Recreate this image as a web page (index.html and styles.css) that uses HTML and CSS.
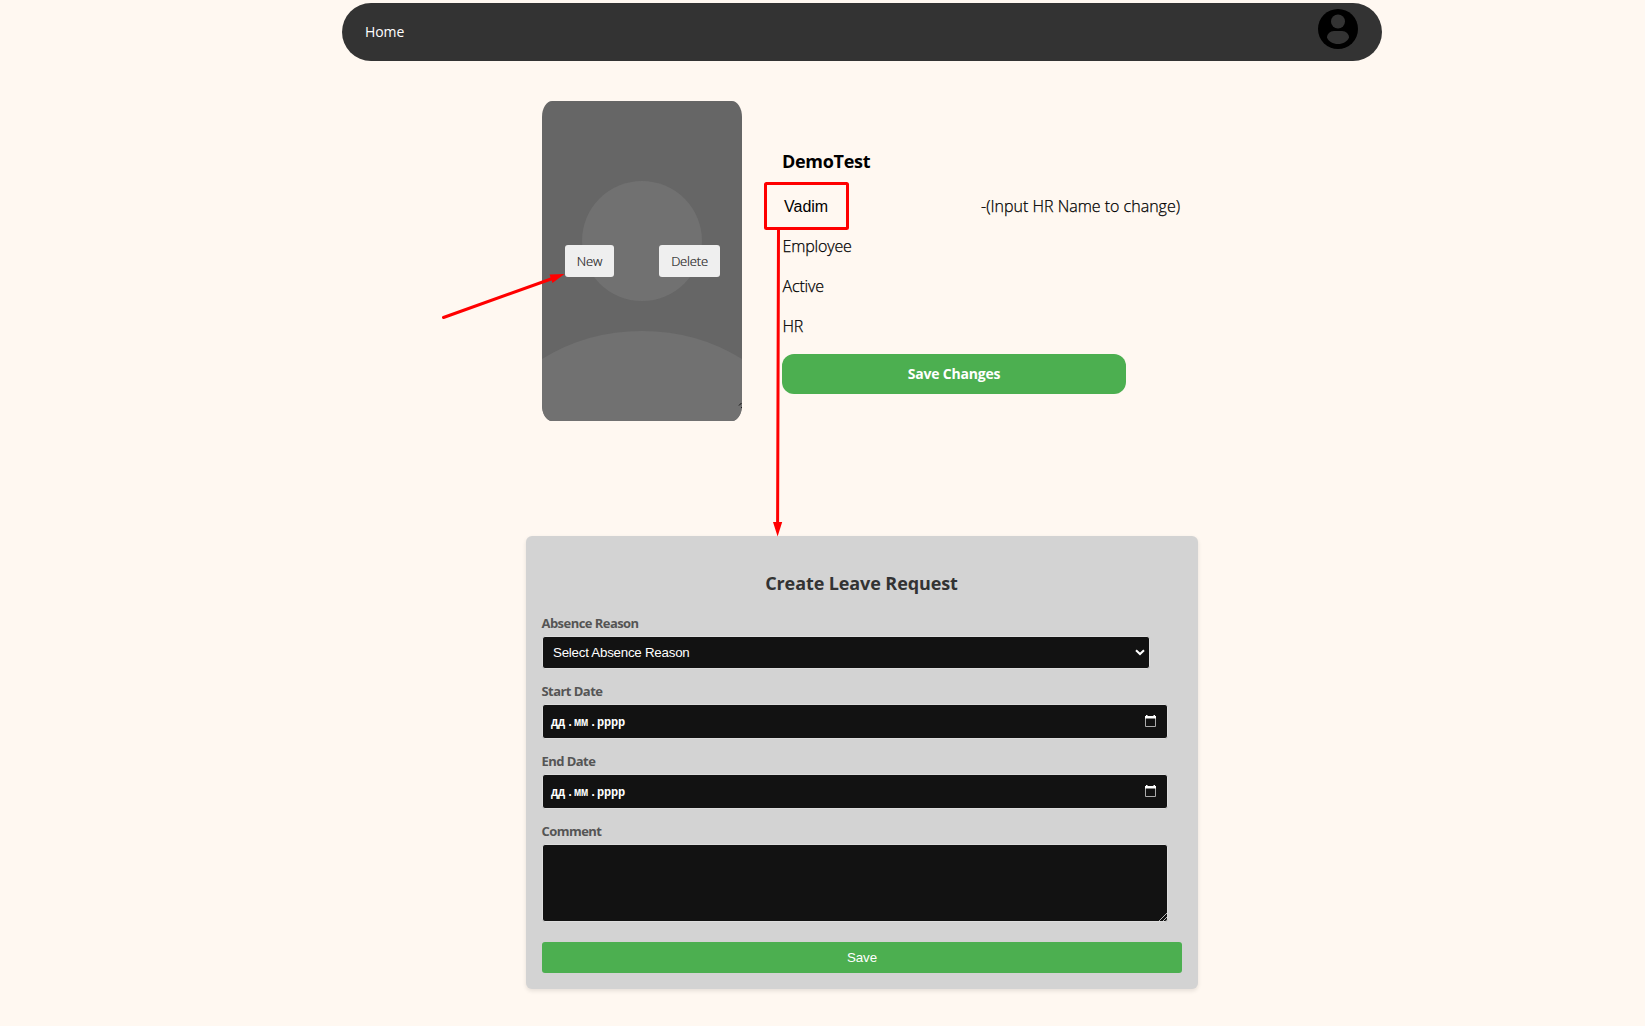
FILE: index.html
```html
<!DOCTYPE html>
<html lang="en">
<head>
<meta charset="utf-8">
<title>Profile</title>
<link rel="stylesheet" href="styles.css">
</head>
<body>
<nav class="navbar">
  <a class="home">Home</a>
  <svg class="account" width="40" height="40" viewBox="0 0 40 40">
    <circle cx="20" cy="20" r="20" fill="#000"/>
    <circle cx="20" cy="12.5" r="7" fill="#333"/>
    <path d="M16 22H24C28 22 31 25 31 28.5C29.500 32.500 25 35 20 35C15 35 10.500 32.500 9 28.500C9 25 12 22 16 22Z" fill="#333"/>
  </svg>
</nav>

<section class="profile">
  <div class="photo">
    <svg class="avatar" width="200" height="320" viewBox="0 0 200 320">
      <rect width="200" height="320" fill="#666"/>
      <circle cx="100" cy="140" r="60" fill="#717171"/>
      <path d="M0 258Q45 230 100 230Q155 230 200 258V320H0Z" fill="#717171"/>
      <path d="M197 304.500L199.500 302M199 307L200 306" stroke="#111" stroke-width="1"/>
    </svg>
    <button class="photo-btn new">New</button>
    <button class="photo-btn delete">Delete</button>
  </div>
  <div class="details">
    <h2 class="name">DemoTest</h2>
    <div class="row"><span class="hr-name">Vadim</span><span class="hint">-(Input HR Name to change)</span></div>
    <div class="row"><span class="role">Employee</span></div>
    <div class="row"><span class="state">Active</span></div>
    <div class="row"><span class="dept">HR</span></div>
    <button class="save-changes"><span>Save Changes</span></button>
  </div>
</section>

<form class="leave">
  <h2 class="leave-title">Create Leave Request</h2>
  <label class="label">Absence Reason</label>
  <div class="field select"><span>Select Absence Reason</span>
    <svg width="10" height="7" viewBox="0 0 10 7"><path d="M1 1.200L5 5L9 1.200" fill="none" stroke="#fff" stroke-width="2"/></svg>
  </div>
  <label class="label">Start Date</label>
  <div class="field date"><span class="date-text"><b>дд</b><b>.</b><b>мм</b><b>.</b><b>рррр</b></span>
    <svg width="11" height="12" viewBox="0 0 11 12"><path d="M.5 2V11.500H10.500V2" fill="none" stroke="#aaa"/><path d="M0 1H1V0H2.500V1H8.500V0H10V1H11V3.500H0Z" fill="#fff"/></svg>
  </div>
  <label class="label">End Date</label>
  <div class="field date"><span class="date-text"><b>дд</b><b>.</b><b>мм</b><b>.</b><b>рррр</b></span>
    <svg width="11" height="12" viewBox="0 0 11 12"><path d="M.5 2V11.500H10.500V2" fill="none" stroke="#aaa"/><path d="M0 1H1V0H2.500V1H8.500V0H10V1H11V3.500H0Z" fill="#fff"/></svg>
  </div>
  <label class="label">Comment</label>
  <div class="field comment">
    <svg width="8" height="8" viewBox="0 0 8 8"><path d="M0 8L8 0M4 8L8 4" stroke="#ccc" stroke-width=".9"/></svg>
  </div>
  <button class="save" type="button">Save</button>
</form>

<svg class="annotations" width="1645" height="1026" viewBox="0 0 1645 1026">
  <rect x="765.500" y="183.500" width="82" height="45" rx="1" fill="none" stroke="#f00" stroke-width="3"/>
  <path d="M778.500 229L777.600 524M443.500 317.500L551 279" fill="none" stroke="#f00" stroke-width="3" stroke-linecap="round"/>
  <path d="M773 522H782.200L777.600 536.500ZM564.500 274L549.500 274.500L552.500 283Z" fill="#f00"/>
</svg>
</body>
</html>
```
FILE: styles.css
```css
* { box-sizing: border-box; }
body {
  margin: 0;
  height: 1026px;
  padding-top: 3px;
  overflow: hidden;
  background: #fff8f1;
  font-family: "Open Sans", "Noto Sans", sans-serif;
  color: #000;
}
button { border: 0; padding: 0; font-family: inherit; }
.navbar {
  width: 1040px;
  height: 58px;
  margin-left: 342px;
  padding: 6px 24px 0 23px;
  border-radius: 29px;
  background: #333;
  display: flex;
  justify-content: space-between;
  align-items: flex-start;
}
.home { color: #fff; font-size: 14px; line-height: 20px; margin-top: 13px; letter-spacing: -0.1px; }
.profile { display: flex; margin: 40px 0 0 542px; height: 320px; }
.photo {
  position: relative;
  width: 200px;
  height: 320px;
  border-radius: 10px / 16px;
  overflow: hidden;
}
.avatar { display: block; }
.photo-btn {
  position: absolute;
  top: 144px;
  height: 32px;
  border-radius: 3px;
  background: #efefef;
  color: #222;
  font-size: 13px;
  font-weight: 300;
  -webkit-text-stroke: 0.2px #222;
}
.new { left: 23px; width: 49px; letter-spacing: -0.2px; }
.delete { left: 117px; width: 61px; letter-spacing: -0.2px; }
.details { margin: 47px 0 0 40px; width: 420px; }
.name { margin: 0 0 12px; font-size: 18px; line-height: 26px; font-weight: 700; letter-spacing: -0.3px; }
.row { height: 40px; line-height: 41px; font-size: 16px; font-weight: 300; display: flex; letter-spacing: -0.15px; padding-left: 0.5px; -webkit-text-stroke: 0.25px #000; }
.hr-name { width: 198.5px; padding-left: 1.5px; line-height: 42px; font-family: "Liberation Sans", Arial, sans-serif; font-weight: 400; letter-spacing: 0; -webkit-text-stroke: 0; }
.hint { white-space: nowrap; letter-spacing: 0; }
.save-changes {
  display: block;
  width: 344px;
  height: 40px;
  margin-top: 8px;
  padding-bottom: 1px;
  border-radius: 12px;
  background: #4caf50;
  color: #fff;
  font-size: 14px;
  font-weight: 700;
  letter-spacing: -0.2px;
}
.leave {
  width: 672px;
  height: 453px;
  margin: 115px 0 0 526px;
  padding: 34px 16px 16px;
  border-radius: 6px;
  background: #d3d3d3;
  box-shadow: 0 2px 4px rgba(0, 0, 0, .1);
}
.leave-title { margin: 0 1px 15px 0; text-align: center; font-size: 18px; line-height: 26px; color: #333; letter-spacing: -0.1px; }
.label { display: block; height: 25px; line-height: 24px; margin-left: -0.5px; font-size: 13px; font-weight: 700; color: #555; letter-spacing: -0.55px; }
.field {
  border: 1px solid #ddd;
  border-radius: 3px;
  background: #121212;
  color: #fff;
  display: flex;
  justify-content: space-between;
  align-items: center;
  width: 626px;
}
.select {
  width: 608px;
  height: 33px;
  padding: 0 4px 0 10px;
  margin-bottom: 10px;
  font: 13.333px "Liberation Sans", Arial, sans-serif;
  letter-spacing: -0.24px;
}
.date { height: 35px; padding: 0 11px 0 8px; margin-bottom: 10px; }
.date svg { margin-bottom: 1px; }
.date-text { display: flex; margin-top: 2px; font: 12px/18px "Liberation Mono", monospace; }
.date-text b { font-weight: 700; width: 15px; letter-spacing: -0.2px; }
.date-text b:nth-child(even) { width: 8px; text-align: center; }
.date-text b:last-child { width: 30px; }
.comment { height: 78px; align-items: flex-end; justify-content: flex-end; }
.save {
  display: block;
  width: 640px;
  height: 31px;
  margin-top: 20px;
  border-radius: 3px;
  background: #4caf50;
  color: #fff;
  font: 13.333px "Liberation Sans", Arial, sans-serif;
  letter-spacing: -0.1px;
}
.annotations { position: absolute; left: 0; top: 0; pointer-events: none; }
```
